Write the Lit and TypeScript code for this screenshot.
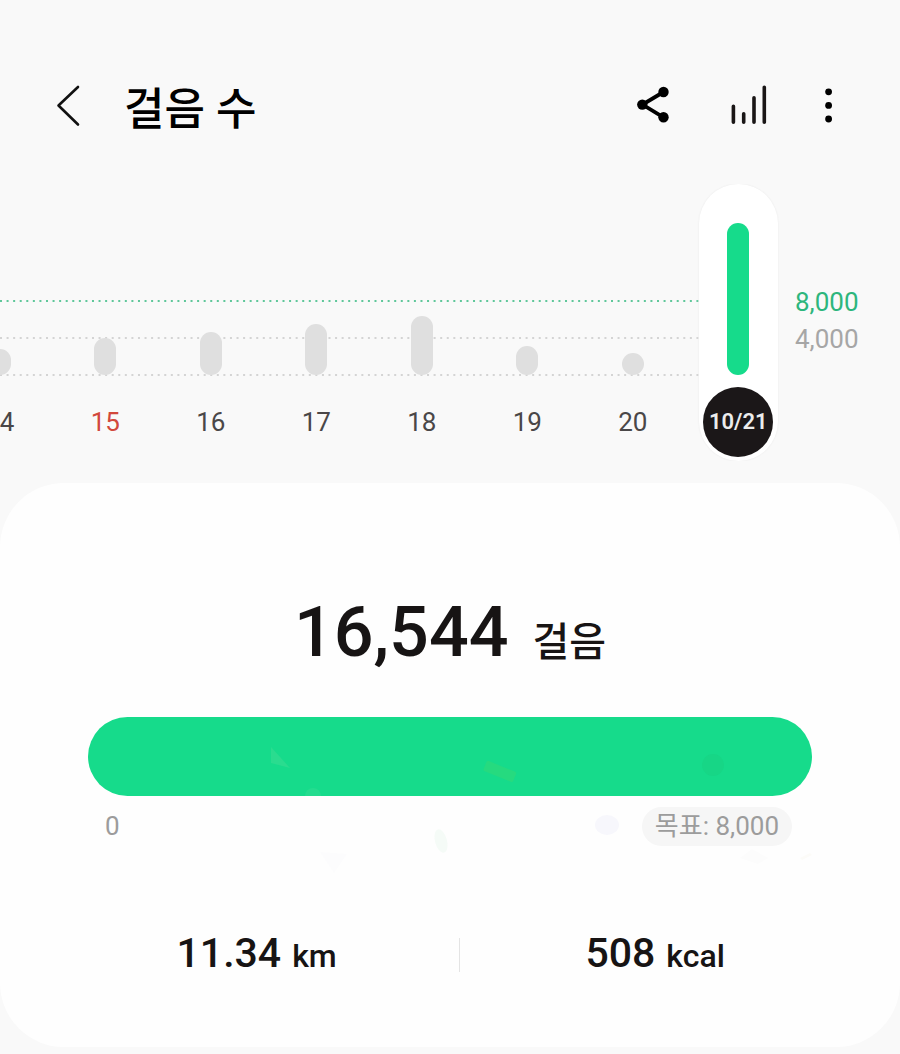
import { LitElement, html, css, svg } from "lit";
import { customElement, state } from "lit/decorators.js";
import { classMap } from "lit/directives/class-map.js";
import { styleMap } from "lit/directives/style-map.js";

interface Day {
  label: string;
  bar: number;
  holiday?: boolean;
}

const DAYS: Day[] = [
  { label: "14", bar: 26 },
  { label: "15", bar: 37, holiday: true },
  { label: "16", bar: 43 },
  { label: "17", bar: 51 },
  { label: "18", bar: 59 },
  { label: "19", bar: 29 },
  { label: "20", bar: 22 },
  { label: "10/21", bar: 152 },
];

@customElement("step-header")
class StepHeader extends LitElement {
  static styles = css`
    :host {
      display: block;
    }
    .bar {
      display: flex;
      align-items: flex-start;
      padding: 70px 40px 38px 36px;
    }
    .title {
      flex: 1;
      margin: 0 0 0 24px;
      padding-top: 4px;
      font-size: 44px;
      font-weight: 500;
      line-height: 72px;
      color: #000;
    }
    .icon {
      display: flex;
      align-items: center;
      justify-content: center;
      width: 64px;
      height: 72px;
      padding: 0;
      border: 0;
      background: none;
      cursor: pointer;
    }
    .actions {
      display: flex;
      gap: 16px;
    }
    .share {
      margin-right: 16px;
    }
  `;

  render() {
    return html`
      <header class="bar">
        <button class="icon" aria-label="뒤로">
          <svg width="48" height="48" viewBox="0 0 48 48" fill="none" stroke="#111" stroke-width="2.6" stroke-linecap="round" stroke-linejoin="round">
            <path d="M34 5 L14.5 23.5 L34 42.5" />
          </svg>
        </button>
        <h1 class="title">걸음 수</h1>
        <div class="actions">
          <button class="icon share" aria-label="공유">
            <svg width="48" height="48" viewBox="0 0 48 48">
              <path d="M35.5 10 L14.5 22.6 L35.5 35.3" fill="none" stroke="#000" stroke-width="3.8" />
              <circle cx="35.5" cy="10" r="5.2" />
              <circle cx="14.3" cy="22.6" r="5.2" />
              <circle cx="35.5" cy="35.3" r="5.2" />
            </svg>
          </button>
          <button class="icon" aria-label="통계">
            <svg width="48" height="48" viewBox="0 0 48 48" stroke="#1a1616" stroke-width="3.6" stroke-linecap="round">
              <path d="M9.4 24.2 V40.2 M19.7 31.8 V40.2 M30 15.8 V40.2 M40.3 5.2 V40.2" />
            </svg>
          </button>
          <button class="icon" aria-label="더보기">
            <svg width="48" height="48" viewBox="0 0 48 48">
              <circle cx="24.6" cy="9.8" r="3.4" />
              <circle cx="24.6" cy="23.4" r="3.4" />
              <circle cx="24.6" cy="37" r="3.4" />
            </svg>
          </button>
        </div>
      </header>
    `;
  }
}

@customElement("step-chart")
class StepChart extends LitElement {
  @state() private selected = DAYS.length - 1;

  static styles = css`
    :host {
      display: block;
      overflow: hidden;
    }
    .chart {
      display: grid;
      grid-template-columns: minmax(0, 1fr) 109px;
      font-family: Roboto, "Noto Sans CJK KR", sans-serif;
    }
    .lines,
    .days {
      grid-area: 1 / 1;
    }
    .lines {
      display: flex;
      flex-direction: column;
      gap: 35px;
      margin-right: 60px;
      padding-top: 116px;
    }
    .line {
      display: block;
      width: 100%;
      height: 2px;
      stroke: #d4d4d4;
    }
    .line.goal {
      stroke: #5fc79a;
    }
    .days {
      display: grid;
      grid-template-columns: repeat(8, minmax(0, 1fr));
      justify-items: center;
      margin: 0 0 0 -53px;
      padding: 0;
      list-style: none;
    }
    .day {
      display: flex;
      flex-direction: column;
      align-items: center;
      gap: 12px;
      width: 79px;
      padding: 0 0 4px;
      border: 0;
      border-radius: 40px;
      background: none;
      color: #4a4748;
      font: 400 26px/70px Roboto, sans-serif;
      cursor: pointer;
    }
    .day.holiday {
      color: #d2483c;
    }
    .day.selected {
      background: #fff;
      box-shadow: 0 0 2px #e8e8e8;
      color: #ececec;
      font-size: 22px;
      font-weight: 600;
    }
    .track {
      display: flex;
      align-items: flex-end;
      height: 191px;
    }
    .fill {
      width: 22px;
      border-radius: 11px;
      background: #dfdfdf;
    }
    .selected .fill {
      background: #16db8b;
    }
    .date {
      width: 70px;
      height: 70px;
      border-radius: 50%;
    }
    .selected .date {
      background: #1b1718;
    }
    .axis {
      padding: 100px 0 0 4px;
      color: #a6a6a6;
      font-size: 26px;
      line-height: 37px;
    }
    .axis .goal {
      color: #2db67d;
    }
  `;

  private line(goal = false) {
    return html`<svg class=${classMap({ line: true, goal })} aria-hidden="true">
      ${svg`<line x1="0" y1="1" x2="100%" y2="1" stroke-width="2" stroke-dasharray="2 4.57" />`}
    </svg>`;
  }

  render() {
    return html`
      <section class="chart" aria-label="일별 걸음 수">
        <div class="lines">${this.line(true)}${this.line()}${this.line()}</div>
        <ol class="days">
          ${DAYS.map(
            (d, i) => html`<li>
              <button
                class=${classMap({ day: true, holiday: !!d.holiday, selected: i === this.selected })}
                aria-pressed=${i === this.selected}
                @click=${() => (this.selected = i)}
              >
                <span class="track"><span class="fill" style=${styleMap({ height: `${d.bar}px` })}></span></span>
                <span class="date">${d.label}</span>
              </button>
            </li>`
          )}
        </ol>
        <div class="axis">
          <div class="goal">8,000</div>
          <div>4,000</div>
        </div>
      </section>
    `;
  }
}

@customElement("step-summary")
class StepSummary extends LitElement {
  static styles = css`
    :host {
      display: block;
    }
    .card {
      padding: 101px 0 63px;
      border-radius: 64px;
      background: #fefefe;
      color: #171414;
      font-family: Roboto, "Noto Sans CJK KR", sans-serif;
      font-weight: 500;
    }
    .total {
      display: flex;
      align-items: baseline;
      justify-content: center;
      gap: 24px;
      margin: 0;
      font-size: 70px;
      line-height: 96px;
    }
    .total .unit {
      font-size: 40px;
      line-height: 48px;
    }
    .goal {
      position: relative;
      margin: 37px 88px 0;
    }
    .progress {
      height: 79px;
      border-radius: 40px;
      background: #e8e8e8;
      overflow: hidden;
    }
    .value {
      height: 100%;
      background: #16db8b;
    }
    .confetti {
      position: absolute;
      top: 0;
      left: 0;
      width: 100%;
      height: 160px;
      pointer-events: none;
    }
    .scale {
      position: relative;
      display: flex;
      align-items: center;
      justify-content: space-between;
      margin-top: 11px;
      padding: 0 20px 0 17px;
      color: #9c9c9c;
      font-size: 26px;
      font-weight: 400;
      line-height: 39px;
    }
    .target {
      padding: 0 13px;
      border-radius: 20px;
      background: #f6f6f6;
    }
    .stats {
      display: grid;
      grid-template-columns: 52fr 1px 50fr;
      align-items: center;
      margin: 79px 50px 0 54px;
    }
    .stat {
      display: flex;
      align-items: baseline;
      justify-content: center;
      gap: 11px;
      margin: 0;
      font-size: 41px;
      line-height: 56px;
    }
    .stat .unit {
      font-size: 32px;
    }
    .rule {
      height: 34px;
      background: #e4e4e4;
    }
  `;

  render() {
    return html`
      <section class="card">
        <p class="total"><span>16,544</span><span class="unit">걸음</span></p>
        <div class="goal">
          <div class="progress" role="progressbar" aria-label="목표 달성" aria-valuemin="0" aria-valuemax="8000" aria-valuenow="8000">
            <div class="value" style=${styleMap({ width: "100%" })}></div>
          </div>
          <svg class="confetti" viewBox="0 0 724 160" aria-hidden="true">
            <path d="M183 30 L202 51 L183 46 Z" fill="#2adc8f" />
            <path d="M217 79 A8 8 0 1 1 233 79 Z" fill="#24dc8f" />
            <rect x="396" y="49" width="32" height="11" rx="2" transform="rotate(22 412 54)" fill="#26da7f" />
            <circle cx="625" cy="48" r="11" fill="#17d686" />
            <ellipse cx="519" cy="108" rx="12" ry="10" fill="#f7f7fc" />
            <ellipse cx="353" cy="124" rx="6" ry="12" transform="rotate(-15 353 124)" fill="#f5fbf7" />
            <path d="M232 135 L259 137 L246 156 Z" fill="#fcfcfd" />
            <path d="M652 141 L664 132 L680 141 L670 147 Z" fill="#fcfcfc" />
            <path d="M712 141 L722 136 L724 138 L714 143 Z" fill="#fcfbf8" />
          </svg>
          <div class="scale">
            <span>0</span>
            <span class="target">목표: 8,000</span>
          </div>
        </div>
        <div class="stats">
          <p class="stat"><span>11.34</span><span class="unit">km</span></p>
          <div class="rule"></div>
          <p class="stat"><span>508</span><span class="unit">kcal</span></p>
        </div>
      </section>
    `;
  }
}

@customElement("app-root")
class AppRoot extends LitElement {
  static styles = css`
    :host {
      display: block;
      min-height: 100vh;
      background: #f9f9f9;
      font-family: Roboto, "Noto Sans CJK KR", sans-serif;
    }
    .summary {
      margin-top: 22px;
    }
  `;

  render() {
    return html`
      <step-header></step-header>
      <main>
        <step-chart></step-chart>
        <step-summary class="summary"></step-summary>
      </main>
    `;
  }
}
